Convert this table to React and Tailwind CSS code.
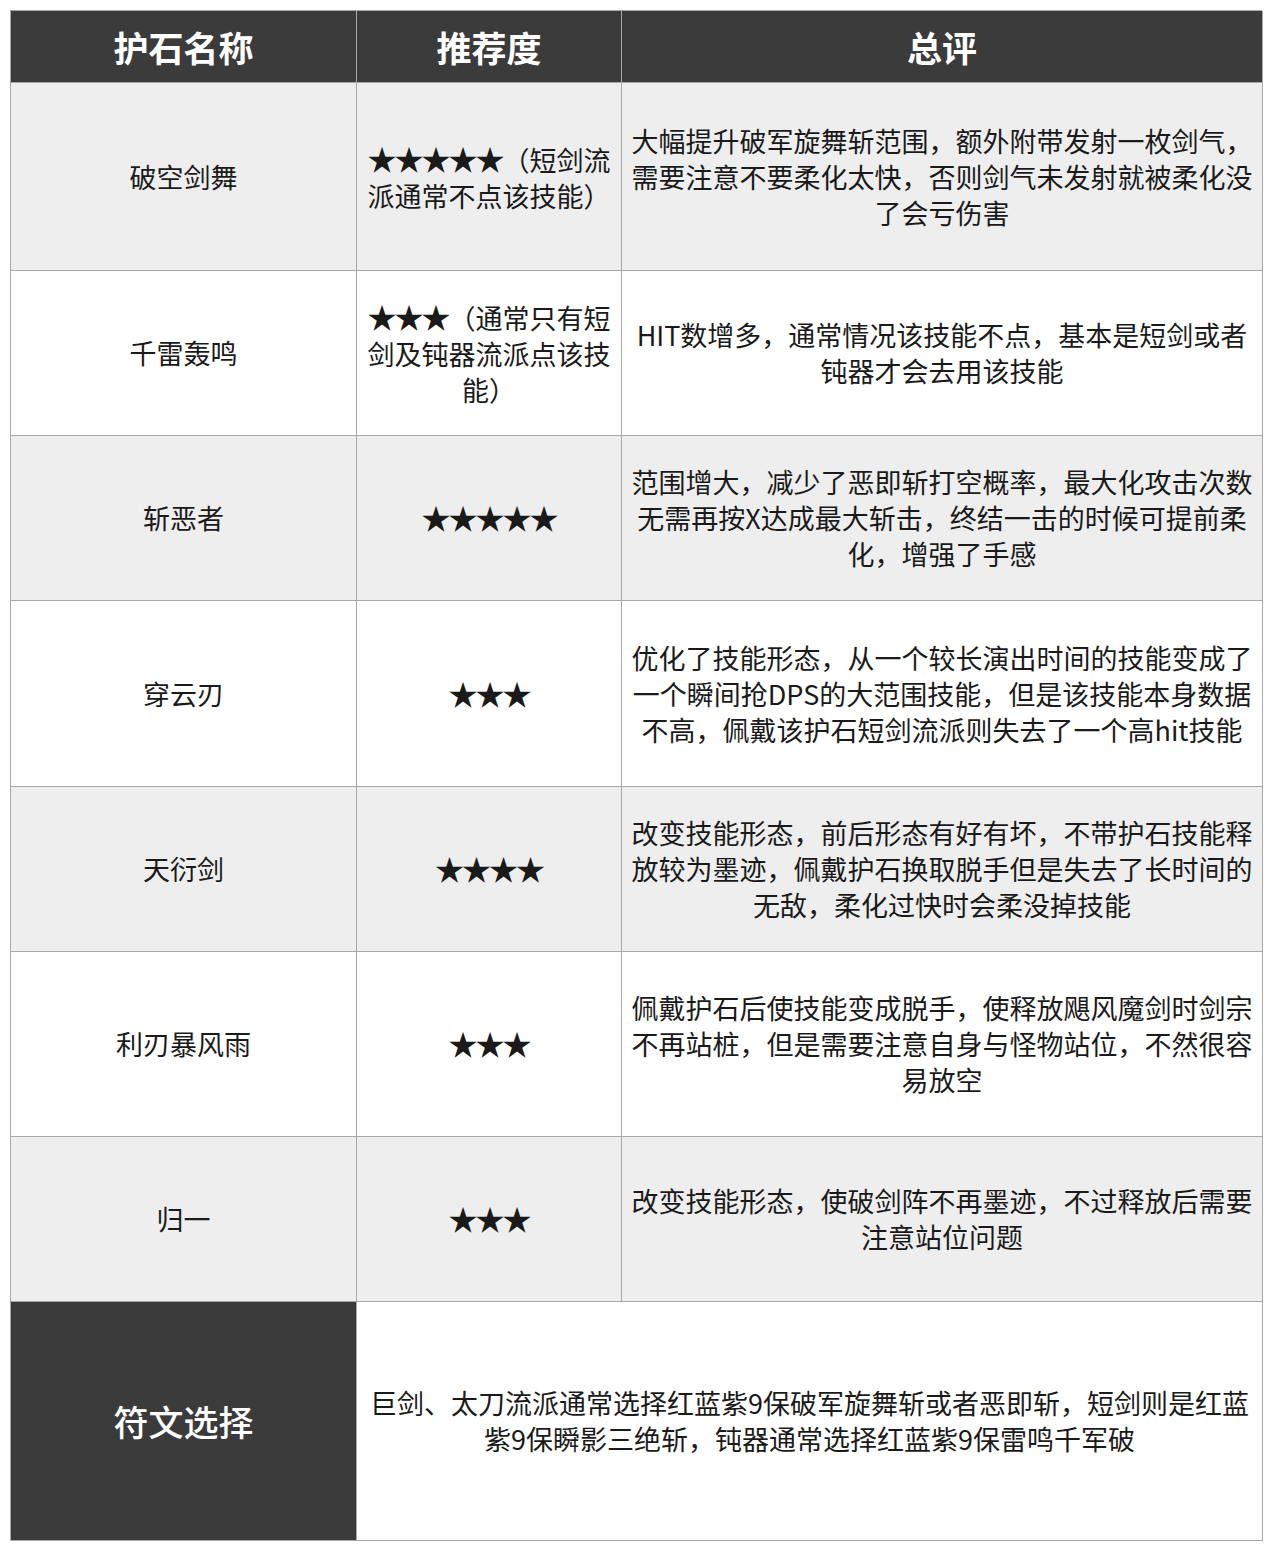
const rows = [
  {
    name: "破空剑舞",
    h: "h-[188px]",
    bg: "bg-[#eeeeee]",
    rate: ["★★★★★（短剑流", "派通常不点该技能）"],
    note: [
      "大幅提升破军旋舞斩范围，额外附带发射一枚剑气，",
      "需要注意不要柔化太快，否则剑气未发射就被柔化没",
      "了会亏伤害",
    ],
  },
  {
    name: "千雷轰鸣",
    h: "h-[165px]",
    bg: "bg-white",
    rate: ["★★★（通常只有短", "剑及钝器流派点该技", "能）"],
    note: ["HIT数增多，通常情况该技能不点，基本是短剑或者", "钝器才会去用该技能"],
  },
  {
    name: "斩恶者",
    h: "h-[165px]",
    bg: "bg-[#eeeeee]",
    rate: ["★★★★★"],
    note: [
      "范围增大，减少了恶即斩打空概率，最大化攻击次数",
      "无需再按X达成最大斩击，终结一击的时候可提前柔",
      "化，增强了手感",
    ],
  },
  {
    name: "穿云刃",
    h: "h-[186px]",
    bg: "bg-white",
    rate: ["★★★"],
    note: [
      "优化了技能形态，从一个较长演出时间的技能变成了",
      "一个瞬间抢DPS的大范围技能，但是该技能本身数据",
      "不高，佩戴该护石短剑流派则失去了一个高hit技能",
    ],
  },
  {
    name: "天衍剑",
    h: "h-[165px]",
    bg: "bg-[#eeeeee]",
    rate: ["★★★★"],
    note: [
      "改变技能形态，前后形态有好有坏，不带护石技能释",
      "放较为墨迹，佩戴护石换取脱手但是失去了长时间的",
      "无敌，柔化过快时会柔没掉技能",
    ],
  },
  {
    name: "利刃暴风雨",
    h: "h-[185px]",
    bg: "bg-white",
    rate: ["★★★"],
    note: [
      "佩戴护石后使技能变成脱手，使释放飓风魔剑时剑宗",
      "不再站桩，但是需要注意自身与怪物站位，不然很容",
      "易放空",
    ],
  },
  {
    name: "归一",
    h: "h-[165px]",
    bg: "bg-[#eeeeee]",
    rate: ["★★★"],
    note: ["改变技能形态，使破剑阵不再墨迹，不过释放后需要", "注意站位问题"],
  },
];

const font = "font-['Noto_Sans_CJK_SC','Noto_Sans',sans-serif]";
const cell = "flex flex-col items-center justify-center text-center border-r border-b border-[#a8a8a8]";

// stars a little bigger than the text, same advance
function withStars(line) {
  const m = line.match(/^(★+)(.*)$/);
  if (!m) return line;
  return (
    <>
      <span className="text-[29px] tracking-[-2px]">{m[1]}</span>
      {m[2]}
    </>
  );
}

function Lines({ lines }) {
  return lines.map((line, i) => (
    <span key={i} className="block whitespace-nowrap">
      {withStars(line)}
    </span>
  ));
}

export default function App() {
  return (
    <div className={`bg-white min-h-[1555px] pt-[10px] pl-[10px] ${font}`}>
      <div className="grid w-[1252px] grid-cols-[346px_265px_641px] border-l border-t border-[#a8a8a8] text-[27px] leading-[36px] text-[#1a1a1a]">
        {["护石名称", "推荐度", "总评"].map((title) => (
          <div key={title} className={`${cell} h-[72px] bg-[#3b3b3b] text-[35px] font-bold text-white`}>
            {title}
          </div>
        ))}

        {rows.map((row) => (
          <div key={row.name} className="contents">
            <div className={`${cell} ${row.h} ${row.bg}`}>{row.name}</div>
            <div className={`${cell} ${row.h} ${row.bg}`}>
              <Lines lines={row.rate} />
            </div>
            <div className={`${cell} ${row.h} ${row.bg}`}>
              <Lines lines={row.note} />
            </div>
          </div>
        ))}

        <div className={`${cell} h-[239px] bg-[#3b3b3b] text-[35px] font-medium text-white`}>符文选择</div>
        <div className={`${cell} col-span-2 h-[239px] bg-white`}>
          <Lines
            lines={[
              "巨剑、太刀流派通常选择红蓝紫9保破军旋舞斩或者恶即斩，短剑则是红蓝",
              "紫9保瞬影三绝斩，钝器通常选择红蓝紫9保雷鸣千军破",
            ]}
          />
        </div>
      </div>
    </div>
  );
}
